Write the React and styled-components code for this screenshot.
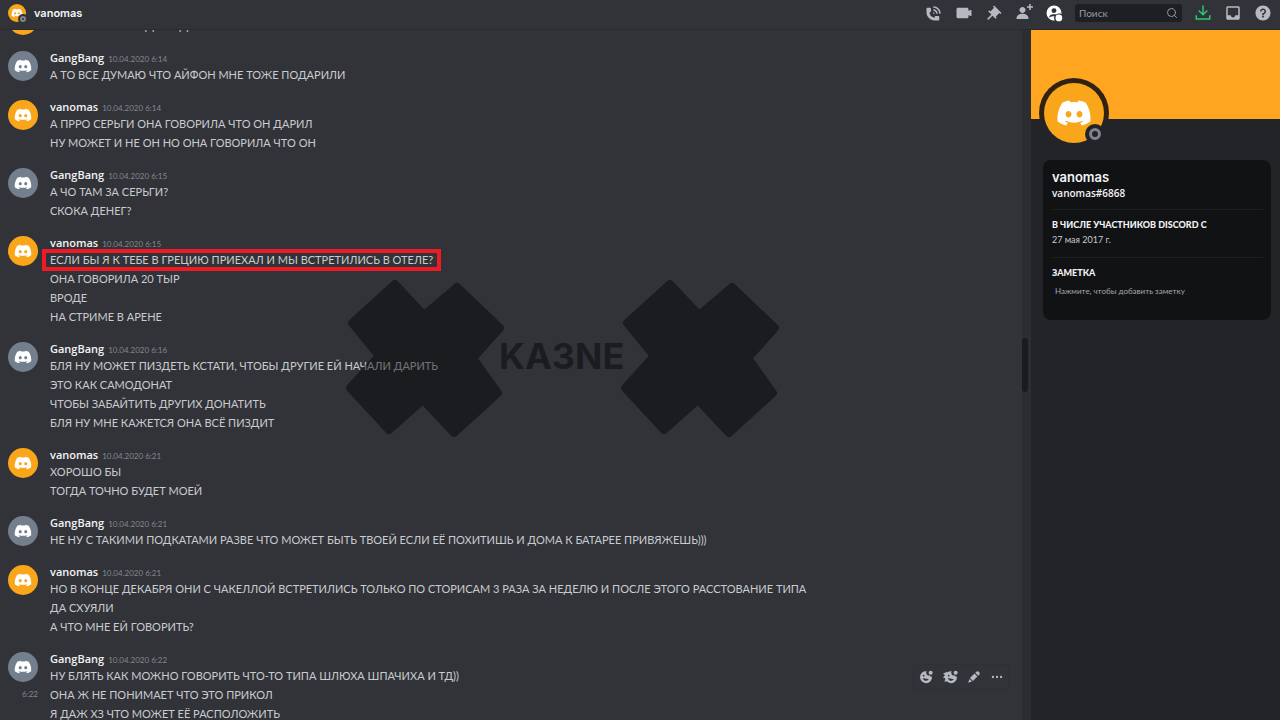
import styled, { createGlobalStyle, css } from 'styled-components';
import { FaDiscord } from 'react-icons/fa';
import { FiSearch } from 'react-icons/fi';

const messages = [
  { author: 'vanomas', continued: true, lines: ['НУ ТИПА ОНА ПОДТВЕРДИЛИ'] },
  { author: 'GangBang', time: '6:14', lines: ['А ТО ВСЕ ДУМАЮ ЧТО АЙФОН МНЕ ТОЖЕ ПОДАРИЛИ'] },
  {
    author: 'vanomas',
    time: '6:14',
    lines: ['А ПРРО СЕРЬГИ ОНА ГОВОРИЛА ЧТО ОН ДАРИЛ', 'НУ МОЖЕТ И НЕ ОН НО ОНА ГОВОРИЛА ЧТО ОН'],
  },
  { author: 'GangBang', time: '6:15', lines: ['А ЧО ТАМ ЗА СЕРЬГИ?', 'СКОКА ДЕНЕГ?'] },
  {
    author: 'vanomas',
    time: '6:15',
    marked: 0,
    lines: [
      'ЕСЛИ БЫ Я К ТЕБЕ В ГРЕЦИЮ ПРИЕХАЛ И МЫ ВСТРЕТИЛИСЬ В ОТЕЛЕ?',
      'ОНА ГОВОРИЛА 20 ТЫР',
      'ВРОДЕ',
      'НА СТРИМЕ В АРЕНЕ',
    ],
  },
  {
    author: 'GangBang',
    time: '6:16',
    lines: [
      'БЛЯ НУ МОЖЕТ ПИЗДЕТЬ КСТАТИ, ЧТОБЫ ДРУГИЕ ЕЙ НАЧАЛИ ДАРИТЬ',
      'ЭТО КАК САМОДОНАТ',
      'ЧТОБЫ ЗАБАЙТИТЬ ДРУГИХ ДОНАТИТЬ',
      'БЛЯ НУ МНЕ КАЖЕТСЯ ОНА ВСЁ ПИЗДИТ',
    ],
  },
  { author: 'vanomas', time: '6:21', lines: ['ХОРОШО БЫ', 'ТОГДА ТОЧНО БУДЕТ МОЕЙ'] },
  {
    author: 'GangBang',
    time: '6:21',
    lines: ['НЕ НУ С ТАКИМИ ПОДКАТАМИ РАЗВЕ ЧТО МОЖЕТ БЫТЬ ТВОЕЙ ЕСЛИ ЕЁ ПОХИТИШЬ И ДОМА К БАТАРЕЕ ПРИВЯЖЕШЬ)))'],
  },
  {
    author: 'vanomas',
    time: '6:21',
    lines: [
      'НО В КОНЦЕ ДЕКАБРЯ ОНИ С ЧАКЕЛЛОЙ ВСТРЕТИЛИСЬ ТОЛЬКО ПО СТОРИСАМ 3 РАЗА ЗА НЕДЕЛЮ И ПОСЛЕ ЭТОГО РАССТОВАНИЕ ТИПА',
      'ДА СХУЯЛИ',
      'А ЧТО МНЕ ЕЙ ГОВОРИТЬ?',
    ],
  },
  {
    author: 'GangBang',
    time: '6:22',
    hovered: 1,
    lines: [
      'НУ БЛЯТЬ КАК МОЖНО ГОВОРИТЬ ЧТО-ТО ТИПА ШЛЮХА ШПАЧИХА И ТД))',
      'ОНА Ж НЕ ПОНИМАЕТ ЧТО ЭТО ПРИКОЛ',
      'Я ДАЖ ХЗ ЧТО МОЖЕТ ЕЁ РАСПОЛОЖИТЬ',
    ],
  },
];

const icons = {
  call: 'M11 5V3C16.515 3 21 7.486 21 13H19C19 8.589 15.411 5 11 5ZM17 13H15C15 10.795 13.206 9 11 9V7C14.309 7 17 9.691 17 13ZM11 11V13H13C13 11.896 12.105 11 11 11ZM14 16H18C18.553 16 19 16.447 19 17V21C19 21.553 18.553 22 18 22H13C6.925 22 2 17.075 2 11V6C2 5.447 2.448 5 3 5H7C7.553 5 8 5.447 8 6V10C8 10.553 7.553 11 7 11H6C6.063 14.938 9 18 13 18V17C13 16.447 13.447 16 14 16Z',
  video:
    'M21.526 8.149C21.231 7.966 20.862 7.951 20.553 8.105L18 9.382V7C18 5.897 17.103 5 16 5H4C2.897 5 2 5.897 2 7V17C2 18.104 2.897 19 4 19H16C17.103 19 18 18.104 18 17V14.618L20.553 15.894C20.694 15.965 20.847 16 21 16C21.183 16 21.365 15.949 21.526 15.851C21.82 15.668 22 15.347 22 15V9C22 8.653 21.82 8.332 21.526 8.149Z',
  pin: 'M22 12L12.101 2.101L10.686 3.514L12.101 4.929L7.151 9.878L5.736 8.465L4.322 9.88L8.565 14.122L2.908 19.778L4.322 21.192L9.979 15.536L14.222 19.778L15.636 18.364L14.222 16.95L19.171 12L20.586 13.414L22 12Z',
  addFriend:
    'M21 3H24V5H21V8H19V5H16V3H19V0H21V3ZM10 12C12.205 12 14 10.205 14 8C14 5.795 12.205 4 10 4C7.795 4 6 5.795 6 8C6 10.205 7.795 12 10 12ZM10 13C5.289 13 2 15.467 2 19V20H18V19C18 15.467 14.711 13 10 13Z',
  download: 'M11 2H13V12L17 8L18.4 9.4L12 15.800L5.600 9.400L7 8L11 12ZM2 15H4V19H20V15H22V21H2Z',
  inbox:
    'M19 3H4.99C3.88 3 3.01 3.89 3.01 5L3 19C3 20.1 3.88 21 4.99 21H19C20.1 21 21 20.1 21 19V5C21 3.89 20.1 3 19 3ZM19 15H15C15 16.66 13.65 18 12 18C10.35 18 9 16.66 9 15H4.99V5H19V15Z',
  help: 'M12 2C6.486 2 2 6.487 2 12C2 17.515 6.486 22 12 22C17.514 22 22 17.515 22 12C22 6.487 17.514 2 12 2ZM12 18.25C11.31 18.25 10.75 17.691 10.75 17C10.75 16.31 11.31 15.75 12 15.75C12.69 15.75 13.25 16.31 13.25 17C13.25 17.691 12.69 18.25 12 18.25ZM13 13.875V15H11V12H12C13.104 12 14 11.103 14 10C14 8.896 13.104 8 12 8C10.896 8 10 8.896 10 10H8C8 7.795 9.795 6 12 6C14.205 6 16 7.795 16 10C16 11.861 14.723 13.429 13 13.875Z',
  edit: 'M19.293 9.828L20.707 8.414C22.265 6.856 22.265 4.93 20.707 3.373C19.15 1.815 17.144 1.815 15.586 3.373L14.172 4.787L19.293 9.828ZM12.758 6.201L5.1 13.86L10.14 18.9L17.8 11.24ZM4.1 15.4L2.1 21.9L8.6 19.9Z',
  more: 'M5 10a2 2 0 1 0 0 4a2 2 0 1 0 0-4ZM12 10a2 2 0 1 0 0 4a2 2 0 1 0 0-4ZM19 10a2 2 0 1 0 0 4a2 2 0 1 0 0-4Z',
};

const Icon = ({ name, size = 18 }) => (
  <svg width={size} height={size} viewBox="0 0 24 24" fill="currentColor" aria-hidden="true">
    <path d={icons[name]} />
  </svg>
);

const ProfileIcon = () => (
  <svg width="18" height="18" viewBox="0 0 24 24" fill="currentColor" aria-hidden="true">
    <path
      fillRule="evenodd"
      d="M22 12A10 10 0 1 0 12 22H13A6.500 6.500 0 0 1 12.500 16.500C10 16.400 7.500 17 5.500 18.200C5.500 15 8 13.600 12 13.600C13 13.600 14 13.700 15 14C16.500 12.700 19 12 22 13ZM12 5.500a3.300 3.300 0 1 0 0 6.600a3.300 3.300 0 1 0 0-6.600Z"
    />
    <circle cx="18.500" cy="18.500" r="4.500" />
  </svg>
);

const ReactionIcon = ({ superReaction }) => (
  <svg width="16" height="16" viewBox="0 0 24 24" fill="currentColor" aria-hidden="true">
    <path
      fillRule="evenodd"
      d="M13 3.300A9 9 0 1 0 21 11.500A4 4 0 0 1 17 9.500A4 4 0 0 1 13 3.300ZM8.500 8.500a1.400 1.400 0 1 1 0 2.800a1.400 1.400 0 1 1 0-2.800ZM7 13.500L16 15.500C14 19 9 18.500 7 13.500Z"
    />
    <circle cx="19" cy="5.500" r="3" />
    {superReaction && <path d="M6 4L0 7L3 9L0 13L4 14L2 19L8 18Z" />}
  </svg>
);

const Avatar = ({ author, size = 30, logo = 18 }) => (
  <AvatarCircle $size={size} $gold={author === 'vanomas'}>
    <FaDiscord size={logo} />
  </AvatarCircle>
);

const Watermark = () => (
  <WatermarkArt viewBox="0 0 436 160" fill="#000" stroke="#000" strokeLinejoin="round">
    <g id="cross" strokeWidth="8">
      <path d="M50 5L79 36L112 8L155 49L128 79L153 114L109 154L78 121L44 151L5 109L34 77L7 44Z" />
    </g>
    <use href="#cross" x="275" />
    <text x="154" y="90" fontSize="36" fontWeight="700" stroke="none">
      KA3NE
    </text>
  </WatermarkArt>
);

const Message = ({ author, time, lines, marked, hovered, continued }) => (
  <Group $continued={continued}>
    <Avatar author={author} />
    <div>
      {!continued && (
        <MessageHead>
          <Author>{author}</Author>
          <Time>10.04.2020 {time}</Time>
        </MessageHead>
      )}
      {lines.map((line, i) => (
        <Line key={line}>
          {i === hovered && <SideTime>{time}</SideTime>}
          {i === marked ? <Mark>{line}</Mark> : line}
          {i === hovered && (
            <Actions>
              <IconButton aria-label="Добавить реакцию">
                <ReactionIcon />
              </IconButton>
              <IconButton aria-label="Суперреакция">
                <ReactionIcon superReaction />
              </IconButton>
              <IconButton aria-label="Редактировать">
                <Icon name="edit" size={14} />
              </IconButton>
              <IconButton aria-label="Ещё">
                <Icon name="more" size={14} />
              </IconButton>
            </Actions>
          )}
        </Line>
      ))}
    </div>
  </Group>
);

const App = () => (
  <Page>
    <GlobalStyle />
    <Header>
      <Presence $small>
        <Avatar author="vanomas" size={18} logo={12} />
      </Presence>
      <Title>vanomas</Title>
      <Tools>
        <IconButton aria-label="Звонок">
          <Icon name="call" />
        </IconButton>
        <IconButton aria-label="Видеозвонок">
          <Icon name="video" />
        </IconButton>
        <IconButton aria-label="Закреплённые сообщения">
          <Icon name="pin" />
        </IconButton>
        <IconButton aria-label="Добавить друзей">
          <Icon name="addFriend" />
        </IconButton>
        <IconButton aria-label="Профиль" $color="#ffffff">
          <ProfileIcon />
        </IconButton>
        <SearchBox>
          <input type="text" placeholder="Поиск" aria-label="Поиск" />
          <FiSearch size={12} />
        </SearchBox>
        <IconButton aria-label="Загрузить" $color="#2dc770">
          <Icon name="download" />
        </IconButton>
        <IconButton aria-label="Входящие">
          <Icon name="inbox" />
        </IconButton>
        <IconButton aria-label="Помощь">
          <Icon name="help" />
        </IconButton>
      </Tools>
    </Header>
    <Body>
      <Chat>
        <Feed>
          {messages.map((message, i) => (
            <Message key={i} {...message} />
          ))}
        </Feed>
        <Track>
          <Thumb />
        </Track>
        <Watermark />
      </Chat>
      <Profile>
        <Banner />
        <Ring>
          <Presence>
            <Avatar author="vanomas" size={60} logo={36} />
          </Presence>
        </Ring>
        <Card>
          <ProfileName>vanomas</ProfileName>
          <Tag>vanomas#6868</Tag>
          <Section>
            <SectionTitle>В ЧИСЛЕ УЧАСТНИКОВ DISCORD С</SectionTitle>
            <Since>27 мая 2017 г.</Since>
          </Section>
          <Section>
            <SectionTitle as="label" htmlFor="note">
              ЗАМЕТКА
            </SectionTitle>
            <Note id="note" rows={1} placeholder="Нажмите, чтобы добавить заметку" />
          </Section>
        </Card>
      </Profile>
    </Body>
  </Page>
);

const GlobalStyle = createGlobalStyle`
  *, *::after {
    box-sizing: border-box;
  }
  body {
    margin: 0;
    background: #313338;
    color: #c9cbcf;
    font-family: Lato, 'Noto Sans', sans-serif;
    font-size: 11px;
  }
  input, textarea, button {
    font: inherit;
    color: inherit;
  }
`;

const Page = styled.div`
  display: flex;
  flex-direction: column;
  height: 100vh;
  overflow: hidden;
`;

const Header = styled.header`
  flex: none;
  display: flex;
  align-items: center;
  gap: 8px;
  height: 30px;
  padding: 0 8px 4px;
  border-bottom: 1px solid #2a2b2f;
`;

const Title = styled.h1`
  margin: 0;
  color: #f2f3f5;
  font-family: Inter, sans-serif;
  font-size: 11px;
  font-weight: 600;
`;

const Tools = styled.div`
  display: flex;
  align-items: center;
  gap: 12px;
  margin-left: auto;
`;

const IconButton = styled.button`
  display: flex;
  padding: 0;
  border: 0;
  background: none;
  color: ${({ $color }) => $color || '#b5bac1'};
`;

const SearchBox = styled.div`
  display: flex;
  align-items: center;
  width: 107px;
  height: 18px;
  padding: 0 4px;
  border-radius: 3px;
  background: #1e1f22;
  color: #949ba4;
  input {
    flex: 1;
    min-width: 0;
    padding: 0;
    border: 0;
    outline: 0;
    background: none;
    font-size: 10px;
  }
  input::placeholder {
    color: #949ba4;
  }
`;

const Body = styled.div`
  flex: 1;
  display: flex;
  min-height: 0;
`;

const Chat = styled.main`
  position: relative;
  flex: 1;
  display: flex;
  min-width: 0;
`;

const Feed = styled.div`
  flex: 1;
  display: flex;
  flex-direction: column;
  justify-content: flex-end;
  gap: 16px;
  min-width: 0;
  margin-bottom: -3px;
  padding-left: 8px;
  overflow: hidden;
`;

const Group = styled.article`
  flex: none;
  display: flex;
  align-items: ${({ $continued }) => ($continued ? 'flex-end' : 'flex-start')};
  gap: 12px;
  > div:last-child {
    flex: 1;
  }
`;

const AvatarCircle = styled.div`
  flex: none;
  display: flex;
  align-items: center;
  justify-content: center;
  width: ${({ $size }) => $size}px;
  height: ${({ $size }) => $size}px;
  border-radius: 50%;
  background: ${({ $gold }) => ($gold ? '#faa61a' : '#747f8d')};
  color: #fff;
`;

const MessageHead = styled.div`
  display: flex;
  align-items: baseline;
  gap: 4px;
  height: 14px;
  line-height: 14px;
`;

const Author = styled.span`
  color: #f2f3f5;
  font-family: 'Open Sans', sans-serif;
  font-size: 11px;
  font-weight: 600;
`;

const Time = styled.time`
  color: #84888f;
  font-size: 8px;
`;

const Line = styled.div`
  position: relative;
  line-height: 19px;
  white-space: nowrap;
`;

const SideTime = styled.time`
  position: absolute;
  right: 100%;
  margin-right: 12px;
  color: #84888f;
  font-size: 8px;
`;

const Mark = styled.mark`
  display: inline-block;
  margin: 0 -4px;
  padding: 0 4px;
  background: none;
  color: inherit;
  line-height: 14px;
  outline: 4px solid #ed1c24;
`;

const Actions = styled.div`
  position: absolute;
  right: 13px;
  bottom: 14px;
  display: flex;
  align-items: center;
  justify-content: space-around;
  width: 96px;
  height: 26px;
  border: 1px solid #2e3035;
  border-radius: 3px;
`;

const Track = styled.div`
  flex: none;
  width: 9px;
  background: #2b2d31;
`;

const Thumb = styled.div`
  width: 6px;
  height: 54px;
  margin-top: 308px;
  border-radius: 3px;
  background: #1a1b1e;
`;

const WatermarkArt = styled.svg`
  position: absolute;
  top: 249px;
  left: 345px;
  width: 436px;
  opacity: 0.43;
  pointer-events: none;
  font-family: Inter, sans-serif;
`;

const Profile = styled.aside`
  flex: none;
  width: 249px;
  background: #232428;
`;

const Banner = styled.div`
  height: 89px;
  background: #ffa51f;
`;

const Ring = styled.div`
  display: flex;
  align-items: center;
  justify-content: center;
  width: 70px;
  height: 70px;
  margin: -41px 0 0 8px;
  border-radius: 50%;
  background: linear-gradient(#2f2212 41px, #232428 41px);
`;

const Presence = styled.div`
  position: relative;
  &::after {
    content: '';
    position: absolute;
    right: 3px;
    bottom: 3px;
    width: 12px;
    height: 12px;
    border: 3px solid #80848e;
    border-radius: 50%;
    background: #232428;
    box-shadow: 0 0 0 4px #232428;
    ${({ $small }) =>
      $small &&
      css`
        right: 0;
        bottom: 0;
        width: 6px;
        height: 6px;
        border-width: 2px;
        background: #313338;
        box-shadow: 0 0 0 2px #313338;
      `}
  }
`;

const Card = styled.section`
  margin: 12px 9px 0 12px;
  padding: 8px 8px 12px 9px;
  border-radius: 8px;
  background: #111214;
`;

const ProfileName = styled.h2`
  margin: 0;
  color: #f2f3f5;
  font-family: Inter, sans-serif;
  font-size: 13px;
  line-height: 18px;
  font-weight: 600;
`;

const Tag = styled.div`
  color: #f2f3f5;
  font-family: 'Open Sans', sans-serif;
  font-size: 10px;
  line-height: 14px;
  font-weight: 600;
`;

const Section = styled.div`
  margin-top: 9px;
  padding-top: 7px;
  border-top: 1px solid #1e1f22;
`;

const SectionTitle = styled.h3`
  display: block;
  margin: 0;
  color: #f2f3f5;
  font-family: Lato, sans-serif;
  font-size: 9px;
  line-height: 15px;
  font-weight: 900;
`;

const Since = styled.div`
  font-size: 9px;
  line-height: 16px;
`;

const Note = styled.textarea`
  display: block;
  width: 100%;
  height: 24px;
  margin-top: 4px;
  padding: 0 3px;
  border: 0;
  outline: 0;
  background: none;
  font-size: 8px;
  line-height: 14px;
  resize: none;
  &::placeholder {
    color: #a5a8ae;
  }
`;

export default App;
